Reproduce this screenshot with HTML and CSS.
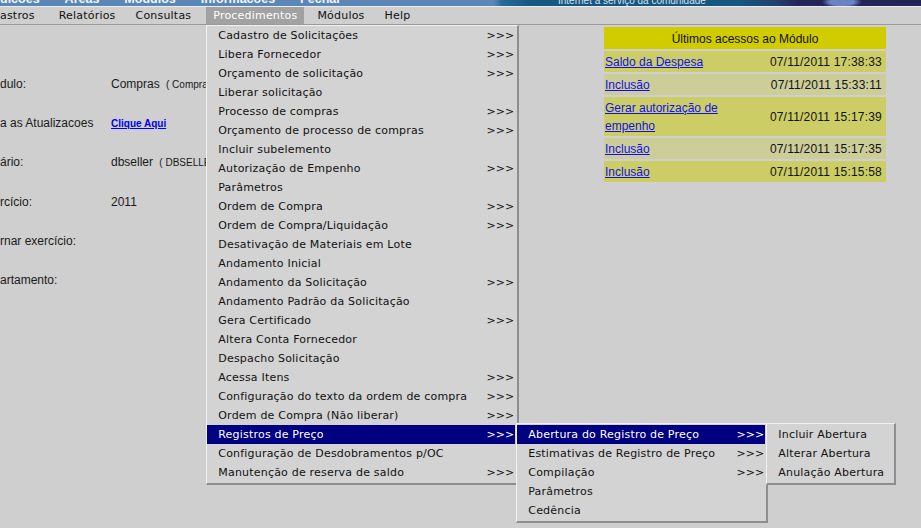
FILE: index.html
```html
<!DOCTYPE html>
<html lang="pt-BR">
<head>
<meta charset="utf-8">
<title>Compras</title>
<link rel="stylesheet" href="styles.css">
</head>
<body>
<div class="topbar">
  <div class="topnav">
    <span>uicoes</span><span>Areas</span><span>Modulos</span><span>Informacoes</span><span>Fechar</span>
  </div>
  <div class="banner"><span class="slogan">Internet a serviço da comunidade</span></div>
</div>
<div class="menubar">
  <div class="mitem first">astros</div>
  <div class="mitem">Relatórios</div>
  <div class="mitem">Consultas</div>
  <div class="mitem open">Procedimentos
    <ul class="menu main-menu">
      <li><span>Cadastro de Solicitações</span><span class="arr">&gt;&gt;&gt;</span></li>
      <li><span>Libera Fornecedor</span><span class="arr">&gt;&gt;&gt;</span></li>
      <li><span>Orçamento de solicitação</span><span class="arr">&gt;&gt;&gt;</span></li>
      <li><span>Liberar solicitação</span></li>
      <li><span>Processo de compras</span><span class="arr">&gt;&gt;&gt;</span></li>
      <li><span>Orçamento de processo de compras</span><span class="arr">&gt;&gt;&gt;</span></li>
      <li><span>Incluir subelemento</span></li>
      <li><span>Autorização de Empenho</span><span class="arr">&gt;&gt;&gt;</span></li>
      <li><span>Parâmetros</span></li>
      <li><span>Ordem de Compra</span><span class="arr">&gt;&gt;&gt;</span></li>
      <li><span>Ordem de Compra/Liquidação</span><span class="arr">&gt;&gt;&gt;</span></li>
      <li><span>Desativação de Materiais em Lote</span></li>
      <li><span>Andamento Inicial</span></li>
      <li><span>Andamento da Solicitação</span><span class="arr">&gt;&gt;&gt;</span></li>
      <li><span>Andamento Padrão da Solicitação</span></li>
      <li><span>Gera Certificado</span><span class="arr">&gt;&gt;&gt;</span></li>
      <li><span>Altera Conta Fornecedor</span></li>
      <li><span>Despacho Solicitação</span></li>
      <li><span>Acessa Itens</span><span class="arr">&gt;&gt;&gt;</span></li>
      <li><span>Configuração do texto da ordem de compra</span><span class="arr">&gt;&gt;&gt;</span></li>
      <li><span>Ordem de Compra (Não liberar)</span><span class="arr">&gt;&gt;&gt;</span></li>
      <li class="hl"><span>Registros de Preço</span><span class="arr">&gt;&gt;&gt;</span>
        <ul class="menu sub1">
          <li class="hl"><span>Abertura do Registro de Preço</span><span class="arr">&gt;&gt;&gt;</span>
            <ul class="menu sub2">
              <li><span>Incluir Abertura</span></li>
              <li><span>Alterar Abertura</span></li>
              <li><span>Anulação Abertura</span></li>
            </ul>
          </li>
          <li><span>Estimativas de Registro de Preço</span><span class="arr">&gt;&gt;&gt;</span></li>
          <li><span>Compilação</span><span class="arr">&gt;&gt;&gt;</span></li>
          <li><span>Parâmetros</span></li>
          <li><span>Cedência</span></li>
        </ul>
      </li>
      <li><span>Configuração de Desdobramentos p/OC</span></li>
      <li><span>Manutenção de reserva de saldo</span><span class="arr">&gt;&gt;&gt;</span></li>
    </ul>
  </div>
  <div class="mitem">Módulos</div>
  <div class="mitem">Help</div>
</div>
<div class="main">
  <div class="form">
    <div class="row"><span class="lbl">dulo:</span><span class="val">Compras <small>( Compras )</small></span></div>
    <div class="row"><span class="lbl">a as Atualizacoes</span><span class="val"><a class="upd" href="#">Clique Aqui</a></span></div>
    <div class="row"><span class="lbl">ário:</span><span class="val">dbseller <small>( DBSELLER )</small></span></div>
    <div class="row"><span class="lbl">rcício:</span><span class="val">2011</span></div>
    <div class="row"><span class="lbl">rnar exercício:</span><span class="val"></span></div>
    <div class="row"><span class="lbl">artamento:</span><span class="val"></span></div>
  </div>
  <table class="recent">
    <thead>
      <tr><th colspan="2">Últimos acessos ao Módulo</th></tr>
    </thead>
    <tbody>
      <tr class="a"><td><a href="#">Saldo da Despesa</a></td><td class="dt">07/11/2011 17:38:33</td></tr>
      <tr class="b"><td><a href="#">Inclusão</a></td><td class="dt">07/11/2011 15:33:11</td></tr>
      <tr class="a"><td><a href="#">Gerar autorização de empenho</a></td><td class="dt">07/11/2011 15:17:39</td></tr>
      <tr class="b"><td><a href="#">Inclusão</a></td><td class="dt">07/11/2011 15:17:35</td></tr>
      <tr class="a"><td><a href="#">Inclusão</a></td><td class="dt">07/11/2011 15:15:58</td></tr>
    </tbody>
  </table>
</div>
</body>
</html>
```

FILE: styles.css
```css
html, body {
  margin: 0;
  padding: 0;
}
body {
  background: #cfcfcf;
  width: 921px;
  height: 528px;
  overflow: hidden;
  font-family: "Liberation Sans", Arial, sans-serif;
  color: #1a1a1a;
}

/* top blue bar (scrolled, only lower part visible) */
.topbar {
  height: 6px;
  background: #5a87b5;
  overflow: hidden;
  display: flex;
}
.topnav {
  flex: 1;
  display: flex;
  gap: 25px;
  margin-top: -8px;
  font: bold 12.5px/14px "Liberation Sans", Arial, sans-serif;
  color: #f2f6fa;
}
.banner {
  width: 441px;
  background:
    radial-gradient(ellipse 20px 6px at 362px 2px, #6b82c4 0, #6b82c4 60%, transparent 100%),
    linear-gradient(90deg, #5a87b5 0, #5a87b5 14px, #2a6a97 22px, #175782 50px, #17567f 260px, #1f426d 295px, #24265a 318px, #222456 100%);
}
.slogan {
  display: block;
  margin: -5px 0 0 78px;
  font: 10px/12px "Liberation Sans", Arial, sans-serif;
  color: #d4e3f1;
}

/* menu bar */
.menubar {
  display: flex;
  gap: 6px;
  height: 17px;
  border-top: 1px solid #ececec;
  border-bottom: 1px solid #9a9a9a;
  font: 11px/17px "DejaVu Sans", sans-serif;
  letter-spacing: 0.2px;
  color: #111;
  position: relative;
  z-index: 2;
}
.mitem {
  padding: 0 7px;
  position: relative;
  white-space: nowrap;
}
.mitem.first {
  padding-left: 0;
  margin-right: 4px;
}
.mitem.open {
  background: #a2a2a2;
  color: #fff;
  margin-left: 2px;
}

/* drop-down menus */
.menu {
  list-style: none;
  margin: 0;
  padding: 0 1px 1px 0;
  position: absolute;
  background: #d3d3d3;
  border-top: 1px solid #f2f2f2;
  border-left: 1px solid #f2f2f2;
  border-right: 2px solid #8e8e8e;
  border-bottom: 2px solid #8e8e8e;
  color: #111;
  font: 11px/19px "DejaVu Sans", sans-serif;
  letter-spacing: 0.2px;
}
.menu li {
  box-sizing: border-box;
  position: relative;
  height: 19px;
  display: flex;
  justify-content: space-between;
  padding: 0 1px 0 11px;
  white-space: nowrap;
}
.menu li.hl {
  background: #000080;
  color: #fff;
}
.menu .menu {
  color: #111;
}
.menu .arr {
  letter-spacing: 0;
}
.main-menu {
  top: calc(100% + 1px);
  left: 0;
  padding-right: 2px;
}
.main-menu > li { width: 308px; }
.sub1 {
  top: -2px;
  left: 309px;
  padding-top: 1px;
}
.sub1 > li { width: 248px; }
.sub2 {
  top: -2px;
  left: 249px;
  padding-top: 1px;
  padding-right: 0;
}
.sub2 > li { width: 127px; }

/* main content */
.main {
  display: flex;
  align-items: flex-start;
}
.form {
  width: 604px;
  padding-top: 40px;
  font-size: 12px;
}
.row {
  display: flex;
  height: 39.2px;
  line-height: 39px;
  white-space: nowrap;
}
.lbl {
  width: 111px;
  overflow: hidden;
}
.val small {
  font-size: 10px;
  margin-left: 3px;
}
.upd {
  font-weight: bold;
  font-size: 10px;
  color: #0000ee;
}

/* recent access table */
.recent {
  width: 282px;
  border-spacing: 0 2px;
  font-size: 12px;
  table-layout: fixed;
}
.recent th {
  background: #d0cc00;
  font-weight: normal;
  height: 21px;
  padding: 1px 0 0;
  line-height: 20px;
  color: #111;
}
.recent td {
  padding: 2px 4px 1px 1px;
  line-height: 18px;
  vertical-align: middle;
}
.recent tr.a td { background: #cdcd66; }
.recent tr.b td { background: #cdcd9a; }
.recent a {
  color: #1010ee;
}
.recent td.dt {
  text-align: right;
  letter-spacing: 0.2px;
  color: #111;
  white-space: nowrap;
}
```
